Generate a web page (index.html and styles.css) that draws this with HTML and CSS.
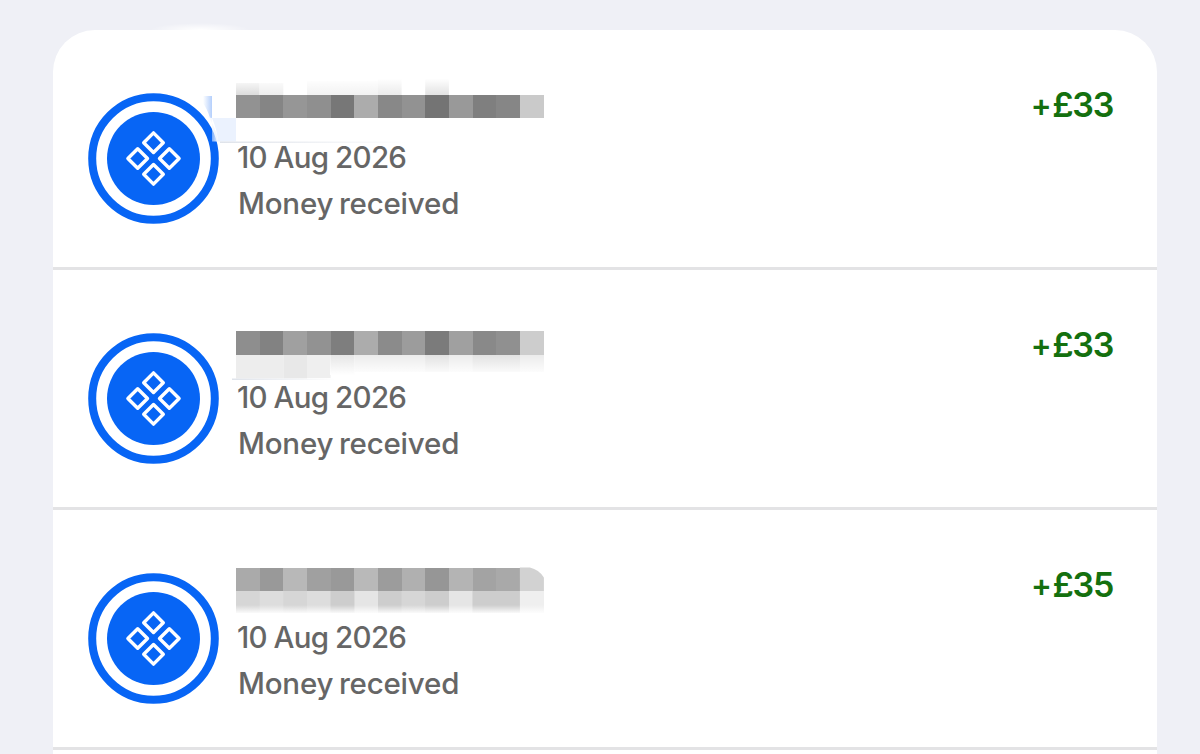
FILE: index.html
```html
<!DOCTYPE html>
<html lang="en">
<head>
    <title>Transactions</title>
    <meta charset="UTF-8">
    <link rel="stylesheet" href="styles.css">
</head>
<body>
<svg class="defs" width="0" height="0">
    <symbol id="badge" viewBox="0 0 131 131">
        <circle cx="65.5" cy="65.5" r="61.3" fill="#fff" stroke="#0765f5" stroke-width="8"/>
        <circle cx="65.5" cy="65.5" r="46.5" fill="#0765f5"/>
        <g fill="none" stroke="#fff" stroke-width="3.4" stroke-linejoin="round">
            <path d="M65.5 39.9l9.8 9.8-9.8 9.8-9.8-9.8z"/>
            <path d="M49.7 55.7l9.8 9.8-9.8 9.8-9.8-9.8z"/>
            <path d="M81.3 55.7l9.8 9.8-9.8 9.8-9.8-9.8z"/>
            <path d="M65.5 71.5l9.8 9.8-9.8 9.8-9.8-9.8z"/>
        </g>
    </symbol>
    <linearGradient id="fadeUp" x1="0" y1="0" x2="0" y2="1">
        <stop offset="0" stop-color="#fff"/>
        <stop offset=".3" stop-color="#fff"/>
        <stop offset="1" stop-color="#fff" stop-opacity="0"/>
    </linearGradient>
    <linearGradient id="fadeDown" x1="0" y1="0" x2="0" y2="1">
        <stop offset="0" stop-color="#fff" stop-opacity="0"/>
        <stop offset="1" stop-color="#fff"/>
    </linearGradient>
    <linearGradient id="smudge" x1="0" y1="0" x2="1" y2="0">
        <stop offset=".1" stop-color="#b4cffc" stop-opacity="0"/>
        <stop offset="1" stop-color="#b4cffc"/>
    </linearGradient>
    <linearGradient id="wipe" x1="0" y1="0" x2="1" y2="0">
        <stop offset="0" stop-color="#ebf2fe" stop-opacity="0"/>
        <stop offset="1" stop-color="#ebf2fe"/>
    </linearGradient>
    <linearGradient id="hair" x1="0" y1="0" x2="1" y2="0">
        <stop offset="0" stop-color="#dfe3ea"/>
        <stop offset="1" stop-color="#fff"/>
    </linearGradient>
    <radialGradient id="glow">
        <stop offset="0" stop-color="#fff"/>
        <stop offset="1" stop-color="#fff" stop-opacity="0"/>
    </radialGradient>
</svg>

<div class="card">
    <div class="row">
        <svg class="badge"><use href="#badge"/></svg>
        <div class="info">
            <svg class="name" viewBox="0 0 308 110">
                <ellipse cx="-36" cy="0" rx="50" ry="7" fill="url(#glow)"/>
                <path d="M-24 60H-32L-24 88H0V60z" fill="#fff"/>
                <path d="M-34 66H-24V88H-26Q-29 78-34 72z" fill="url(#smudge)"/>
                <path d="M-30 84L-24 88V111.5H-18Q-20 96-30 84z" fill="url(#wipe)"/>
                <path d="M-24 88H0v23.5H-18q-1-12-6-23.5z" fill="#ebf2fe"/>
                <path d="M-16 111.5H170v1.5H-16z" fill="url(#hair)"/>
                <g>
                    <path d="M0 53h23.6v12H0z" fill="#dedede"/>
                    <path d="M23.6 53h23.7v12H23.6z" fill="#eee"/>
                    <path d="M71 51h71v14H71z" fill="#f3f3f3"/>
                    <path d="M142 46h23.6v19H142z" fill="#ececec"/>
                    <path d="M189.2 44h23.7v21h-23.7z" fill="#e4e4e4"/>
                    <path d="M-2 42h312v22H-2z" fill="url(#fadeUp)"/>
                </g>
                <g shape-rendering="crispEdges">
                    <path d="M0 64.6h24v23.8H0z" fill="#929292"/>
                    <path d="M23.6 64.6h24v23.8h-24z" fill="#858585"/>
                    <path d="M47.3 64.6h24v23.8h-24z" fill="#969696"/>
                    <path d="M71 64.6h24v23.8H71z" fill="#8f8f8f"/>
                    <path d="M94.6 64.6h24v23.8h-24z" fill="#777"/>
                    <path d="M118.3 64.6h24v23.8h-24z" fill="#acacac"/>
                    <path d="M142 64.6h24v23.8h-24z" fill="#888"/>
                    <path d="M165.6 64.6h24v23.8h-24z" fill="#929292"/>
                    <path d="M189.2 64.6h24v23.8h-24z" fill="#747474"/>
                    <path d="M212.9 64.6h24v23.8h-24z" fill="#999"/>
                    <path d="M236.6 64.6h24v23.8h-24z" fill="#7f7f7f"/>
                    <path d="M260.2 64.6h24v23.8h-24z" fill="#868686"/>
                    <path d="M283.9 64.6h24v23.8h-24z" fill="#cacaca"/>
                </g>
            </svg>
            <div class="date">10 Aug 2026</div>
            <div class="type">Money received</div>
        </div>
        <div class="amount"><span class="sign">+</span>£33</div>
    </div>

    <div class="row">
        <svg class="badge"><use href="#badge"/></svg>
        <div class="info">
            <svg class="name" viewBox="0 0 308 110">
                <g>
                    <path d="M0 85h47.3v23.5H0z" fill="#ededed"/>
                    <path d="M47.3 85H71v23.5H47.3z" fill="#e8e8e8"/>
                    <path d="M71 85h23.6v23H71z" fill="#efefef"/>
                    <path d="M94.6 85h23.7v20H94.6z" fill="#e6e6e6"/>
                    <path d="M118.3 85H308v17H118.3z" fill="#ececec"/>
                    <path d="M189.2 85h23.7v17h-23.7zM236.6 85h47.3v17h-47.3z" fill="#e2e2e2"/>
                    <path d="M94 85h216v20H94z" fill="url(#fadeDown)"/>
                    <path d="M-4 108.5H100v1.5H-4z" fill="url(#hair)"/>
                </g>
                <g shape-rendering="crispEdges">
                    <path d="M0 61h24v23.8H0z" fill="#8e8e8e"/>
                    <path d="M23.6 61h24v23.8h-24z" fill="#828282"/>
                    <path d="M47.3 61h24v23.8h-24z" fill="#a0a0a0"/>
                    <path d="M71 61h24v23.8H71z" fill="#929292"/>
                    <path d="M94.6 61h24v23.8h-24z" fill="#7e7e7e"/>
                    <path d="M118.3 61h24v23.8h-24z" fill="#acacac"/>
                    <path d="M142 61h24v23.8h-24z" fill="#8b8b8b"/>
                    <path d="M165.6 61h24v23.8h-24z" fill="#9c9c9c"/>
                    <path d="M189.2 61h24v23.8h-24z" fill="#7b7b7b"/>
                    <path d="M212.9 61h24v23.8h-24z" fill="#a0a0a0"/>
                    <path d="M236.6 61h24v23.8h-24z" fill="#898989"/>
                    <path d="M260.2 61h24v23.8h-24z" fill="#909090"/>
                    <path d="M283.9 61h24v23.8h-24z" fill="#cdcdcd"/>
                </g>
            </svg>
            <div class="date">10 Aug 2026</div>
            <div class="type">Money received</div>
        </div>
        <div class="amount"><span class="sign">+</span>£33</div>
    </div>

    <div class="row">
        <svg class="badge"><use href="#badge"/></svg>
        <div class="info">
            <svg class="name" viewBox="0 0 308 110">
                <g>
                    <path d="M0 81h308v22H0z" fill="#d6d6d6"/>
                    <path d="M23.6 81h23.7v22H23.6zM71 81h23.6v22H71z" fill="#ddd"/>
                    <path d="M118.3 81H142v22h-23.7zM212.9 81h23.7v22h-23.7z" fill="#e5e5e5"/>
                    <path d="M94.6 81h23.7v22H94.6zM142 81h23.6v22H142zM189.2 81h23.7v22h-23.7zM236.6 81h47.3v22h-47.3z" fill="#cdcdcd"/>
                    <path d="M283.9 81H308v22h-24.1z" fill="#efefef"/>
                    <path d="M-2 95h312v9H-2z" fill="url(#fadeDown)"/>
                </g>
                <g shape-rendering="crispEdges">
                    <path d="M0 57.6h24V81H0z" fill="#aaa"/>
                    <path d="M23.6 57.6h24V81h-24z" fill="#999"/>
                    <path d="M47.3 57.6h24V81h-24z" fill="#b8b8b8"/>
                    <path d="M71 57.6h24V81H71z" fill="#a0a0a0"/>
                    <path d="M94.6 57.6h24V81h-24z" fill="#999"/>
                    <path d="M118.3 57.6h24V81h-24z" fill="#b9b9b9"/>
                    <path d="M142 57.6h24V81h-24z" fill="#9c9c9c"/>
                    <path d="M165.6 57.6h24V81h-24z" fill="#b0b0b0"/>
                    <path d="M189.2 57.6h24V81h-24z" fill="#969696"/>
                    <path d="M212.9 57.6h24V81h-24z" fill="#b4b4b4"/>
                    <path d="M236.6 57.6h24V81h-24z" fill="#a3a3a3"/>
                    <path d="M260.2 57.6h24V81h-24z" fill="#a9a9a9"/>
                </g>
                <path d="M283.9 57.6h10q9 2 14 10V81h-24z" fill="#d2d2d2"/>
            </svg>
            <div class="date">10 Aug 2026</div>
            <div class="type">Money received</div>
        </div>
        <div class="amount"><span class="sign">+</span>£35</div>
    </div>
</div>
</body>
</html>
```

FILE: styles.css
```css
body {
    margin: 0;
    background-color: #eff0f6;
    color: #666;
    font-family: Inter, "Liberation Sans", sans-serif;
}

.defs {
    display: block;
}

.card {
    width: 1104px;
    height: 724px;
    margin: 30px 0 0 53px;
    background-color: #fff;
    border-radius: 42px 42px 0 0;
}

.row {
    display: flex;
    box-sizing: border-box;
    height: 240px;
    padding: 0 44px 0 35px;
    border-bottom: 3px solid #e3e3e5;
}

.badge {
    width: 131px;
    height: 131px;
    margin-top: 62.5px;
    flex-shrink: 0;
}

.info {
    flex: 1;
    padding-left: 17px;
}

.name {
    display: block;
    width: 308px;
    height: 110px;
    margin-bottom: -1px;
    overflow: visible;
}

.date,
.type {
    font-size: 29.5px;
    font-weight: 450;
    line-height: 36px;
    white-space: nowrap;
}

.date {
    padding-left: 1px;
    letter-spacing: -.7px;
    word-spacing: -.5px;
}

.type {
    margin-top: 10px;
    padding-left: 2px;
    letter-spacing: -.2px;
    word-spacing: -2px;
}

.amount {
    margin: 54px 0 0;
    font-size: 34px;
    font-weight: 600;
    line-height: 42px;
    letter-spacing: -1.3px;
    color: #14700f;
}

.sign {
    margin-right: 2px;
    font-size: 31px;
    vertical-align: 1px;
}
```
